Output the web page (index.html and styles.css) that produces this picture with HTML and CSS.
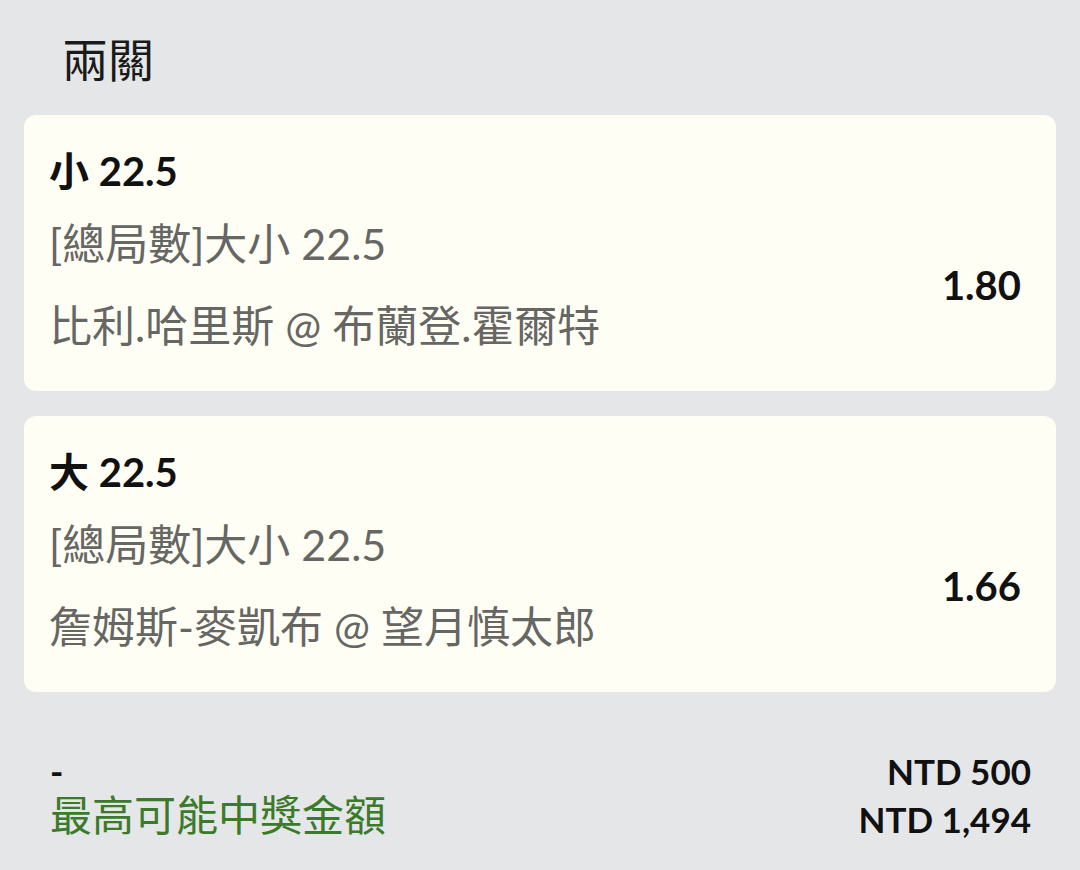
FILE: index.html
```html
<!DOCTYPE html>
<html lang="zh-Hant">
<head>
    <meta charset="UTF-8">
    <meta name="viewport" content="width=device-width, initial-scale=1.0">
    <title>兩關</title>
    <link rel="stylesheet" href="styles.css">
</head>
<body>
<div class="slip">
    <h1 class="slip-title">兩關</h1>

    <div class="leg">
        <div class="leg-pick">小 22.5</div>
        <div class="leg-body">
            <div class="leg-info">
                <div class="leg-market">[總局數]大小 22.5</div>
                <div class="leg-event">比利.哈里斯 @ 布蘭登.霍爾特</div>
            </div>
            <div class="leg-odds">1.80</div>
        </div>
    </div>

    <div class="leg">
        <div class="leg-pick">大 22.5</div>
        <div class="leg-body">
            <div class="leg-info">
                <div class="leg-market">[總局數]大小 22.5</div>
                <div class="leg-event">詹姆斯-麥凱布 @ 望月慎太郎</div>
            </div>
            <div class="leg-odds">1.66</div>
        </div>
    </div>

    <div class="summary">
        <div class="summary-labels">
            <div class="summary-dash">-</div>
            <div class="summary-win">最高可能中獎金額</div>
        </div>
        <div class="summary-values">
            <div>NTD 500</div>
            <div>NTD 1,494</div>
        </div>
    </div>
</div>
</body>
</html>
```

FILE: styles.css
```css
body {
    font-family: Lato, "Noto Sans CJK TC", sans-serif;
    margin: 0;
    background-color: #e4e6e8;
    color: #111;
}
.slip {
    padding: 30px 24px 0 24px;
}
.slip-title {
    margin: 0 0 25px 0;
    padding-left: 38px;
    font-size: 46px;
    font-weight: normal;
    line-height: 60px;
    color: #1a1a1a;
}
.leg {
    background: #fefef5;
    border-radius: 12px;
    padding: 26px 35px 24px 25px;
    margin-bottom: 25px;
}
.leg-pick {
    font-size: 40px;
    font-weight: bold;
    line-height: 60px;
    color: #111;
}
.leg-body {
    display: flex;
    align-items: center;
    justify-content: space-between;
    margin-top: 2px;
}
.leg-market, .leg-event {
    font-size: 43px;
    line-height: 82px;
    color: #666664;
}
.leg-odds {
    font-size: 40px;
    font-weight: bold;
    color: #111;
}
.summary {
    display: flex;
    justify-content: space-between;
    padding: 30px 25px 0 26px;
}
.summary-dash {
    font-size: 36px;
    font-weight: bold;
    line-height: 48px;
}
.summary-win {
    font-size: 42px;
    line-height: 40px;
    color: #3b7a2a;
}
.summary-values {
    text-align: right;
    font-size: 35px;
    font-weight: bold;
    line-height: 48px;
}
```
